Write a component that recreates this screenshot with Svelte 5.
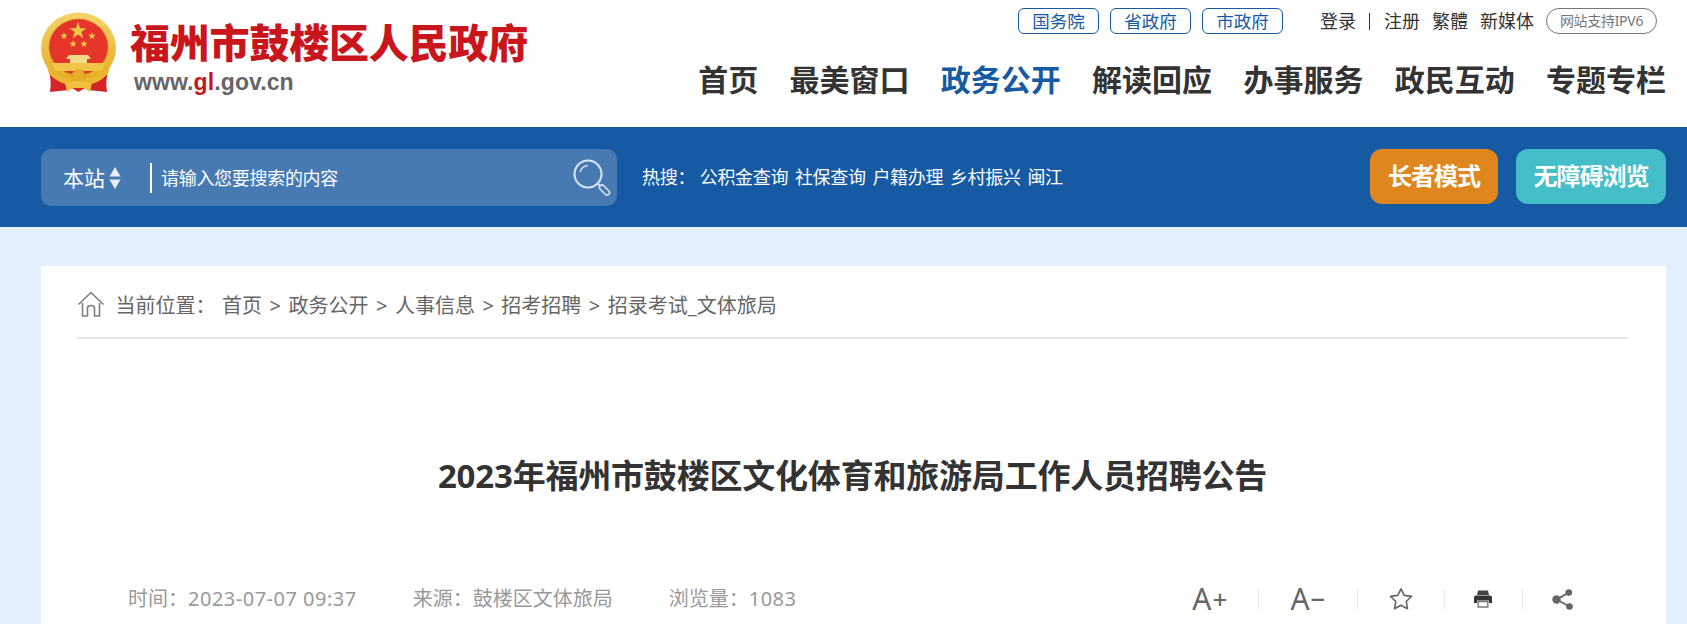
<script>
  const govLinks = ['国务院', '省政府', '市政府'];
  const navItems = ['首页', '最美窗口', '政务公开', '解读回应', '办事服务', '政民互动', '专题专栏'];
  const hotWords = ['公积金查询', '社保查询', '户籍办理', '乡村振兴', '闽江'];
  const crumbs = ['首页', '政务公开', '人事信息', '招考招聘', '招录考试_文体旅局'];

  function star(cx, cy, r, inner = 0.382) {
    const pts = [];
    for (let i = 0; i < 10; i++) {
      const rad = i % 2 ? r * inner : r;
      const a = ((-90 + i * 36) * Math.PI) / 180;
      pts.push(`${(cx + rad * Math.cos(a)).toFixed(2)},${(cy + rad * Math.sin(a)).toFixed(2)}`);
    }
    return pts.join(' ');
  }
</script>

<div class="page">
  <header class="top">
    <div class="logo">
      <svg class="emblem" width="80" height="84" viewBox="0 0 80 84">
        <defs>
          <linearGradient id="gold" x1="0" y1="0" x2="0" y2="1">
            <stop offset="0" stop-color="#f4d36a" />
            <stop offset="1" stop-color="#e6a91f" />
          </linearGradient>
        </defs>
        <!-- drapes -->
        <path d="M10 58 L30 70 L31 80 L12 82 Q14 70 10 58 Z" fill="#d3242a" />
        <path d="M71 58 L51 70 L50 80 L69 82 Q67 70 71 58 Z" fill="#d3242a" />
        <!-- ring and field -->
        <ellipse cx="40.5" cy="38" rx="37.5" ry="35.5" fill="url(#gold)" />
        <ellipse cx="40.5" cy="37" rx="29.5" ry="28" fill="#e5352b" stroke="#c98a1c" stroke-width="0.6" />
        <!-- stars -->
        <polygon points={star(40, 21, 9)} fill="#f2c94c" />
        <polygon points={star(26, 26, 4)} fill="#f2c94c" />
        <polygon points={star(54, 26, 4)} fill="#f2c94c" />
        <polygon points={star(35, 34, 4)} fill="#f2c94c" />
        <polygon points={star(46, 34, 4)} fill="#f2c94c" />
        <!-- gate -->
        <path d="M31 45 H50 L53 49 H49 V53 H32 V49 H28 Z" fill="#f6d98a" />
        <path d="M14 53 H67 L64 61 H17 Z" fill="#f2c447" />
        <!-- lower band -->
        <path d="M9 56 Q24 72 40.5 66 Q57 72 72 56 L70 64 Q56 78 40.5 74 Q25 78 11 64 Z" fill="#eeb52f" />
        <circle cx="40.5" cy="66" r="6.5" fill="#e9ae27" stroke="#d99a1c" stroke-width="0.8" />
        <path d="M27 73 L36 71 H45 L54 73 L52 82 L46 78 H35 L29 82 Z" fill="#f0bf3e" />
        <path d="M34 78 H47 L40.5 82 Z" fill="#d3242a" />
      </svg>
      <div class="logo-text">
        <div class="site-name">福州市鼓楼区人民政府</div>
        <div class="site-url">www.<span class="red">gl</span>.gov.cn</div>
      </div>
    </div>

    <div class="top-right">
      <div class="util">
        <div class="gov-links">
          {#each govLinks as link}
            <a class="gov" href="#top">{link}</a>
          {/each}
        </div>
        <a class="login" href="#top">登录</a>
        <span class="bar"></span>
        <a class="reg" href="#top">注册</a>
        <a class="trad" href="#top">繁體</a>
        <a class="media" href="#top">新媒体</a>
        <span class="ipv6">网站支持IPV6</span>
      </div>
      <nav class="nav">
        {#each navItems as item}
          <a class:active={item === '政务公开'} href="#top">{item}</a>
        {/each}
      </nav>
    </div>
  </header>

  <section class="band">
    <div class="search">
      <span class="scope">本站</span>
      <svg class="updown" width="12" height="24" viewBox="0 0 12 24">
        <path d="M6 1 L11.5 10.5 H0.5 Z M0.5 13.5 H11.5 L6 23 Z" fill="#e8eef6" />
      </svg>
      <span class="divider"></span>
      <span class="placeholder">请输入您要搜索的内容</span>
      <svg class="glass" width="38" height="38" viewBox="0 0 38 38" fill="none" stroke="#dbe6f2">
        <circle cx="15" cy="15" r="13.5" stroke-width="2" />
        <path d="M7 13 Q9 7 15 6.5" stroke-width="1.4" />
        <path d="M25 25 L27 27" stroke-width="2" />
        <rect x="25.5" y="28.5" width="12" height="5" rx="2.5" transform="rotate(45 31.5 31)" stroke-width="1.6" />
      </svg>
    </div>
    <div class="hot">
      <span class="hot-label">热搜&#xFF1A;</span>
      {#each hotWords as word}
        <a href="#top">{word}</a>
      {/each}
    </div>
    <div class="modes">
      <a class="mode orange" href="#top">长者模式</a>
      <a class="mode teal" href="#top">无障碍浏览</a>
    </div>
  </section>

  <main class="card">
    <div class="crumbs">
      <svg class="home" width="28" height="28" viewBox="0 0 28 28" fill="none" stroke="#7d7d7d" stroke-width="1.6">
        <path d="M1.5 14.5 L14 2.5 L26.5 14.5" />
        <path d="M5.5 13 V26 H10.5 V18 Q10.5 15.5 14 15.5 Q17.5 15.5 17.5 18 V26 H22.5 V13" />
      </svg>
      <span class="here">当前位置&#xFF1A;</span>
      {#each crumbs as crumb, i}
        {#if i > 0}<span class="sep">&gt;</span>{/if}
        <a href="#top">{crumb}</a>
      {/each}
    </div>

    <h1>2023年福州市鼓楼区文化体育和旅游局工作人员招聘公告</h1>

    <div class="meta">
      <span class="time">时间&#xFF1A;<span class="num">2023-07-07 09:37</span></span>
      <span class="source">来源&#xFF1A;鼓楼区文体旅局</span>
      <span class="views">浏览量&#xFF1A;<span class="num">1083</span></span>
      <div class="tools">
        <span class="tool font">A<i>+</i></span>
        <span class="tool font">A<i>−</i></span>
        <span class="tool">
          <svg width="24" height="24" viewBox="0 0 24 24">
            <polygon points={star(12, 12.8, 11, 0.5)} fill="none" stroke="#666" stroke-width="1.6" stroke-linejoin="round" />
          </svg>
        </span>
        <span class="tool print">
          <svg width="18" height="18" viewBox="0 0 18 18">
            <path d="M4 0.5 H14 L15 5 H3 Z" fill="#444" />
            <path d="M2 5.5 H16 Q18 5.5 18 7.5 V13 H15 V10.5 H3 V13 H0 V7.5 Q0 5.5 2 5.5 Z" fill="#333" />
            <path d="M4.2 11.5 H13.8 V17 H4.2 Z" fill="none" stroke="#777" stroke-width="1.4" />
          </svg>
        </span>
        <span class="tool last">
          <svg width="21" height="21" viewBox="0 0 21 21" fill="#666">
            <circle cx="4.5" cy="10.5" r="4.2" />
            <circle cx="16.8" cy="3.6" r="3.3" />
            <circle cx="17.5" cy="17.5" r="3.3" />
            <path d="M4.5 10.5 L16.8 3.6 M4.5 10.5 L17.5 17.5" stroke="#666" stroke-width="1.8" />
          </svg>
        </span>
      </div>
    </div>
  </main>
</div>

<style>
  :global(body) {
    margin: 0;
    background: #e3f1ff;
    font-family: "Noto Sans", "Noto Sans CJK SC", sans-serif;
  }
  a {
    color: inherit;
    text-decoration: none;
  }

  .page {
    height: 624px;
    overflow: hidden;
    background: #e3f1ff;
  }

  .top {
    height: 127px;
    box-sizing: border-box;
    background: #fff;
    padding: 0 21px 0 38px;
    display: flex;
    justify-content: space-between;
  }
  .logo {
    display: flex;
    align-items: flex-start;
  }
  .emblem {
    margin-top: 10px;
  }
  .logo-text {
    margin: 22px 0 0 12px;
  }
  .site-name {
    font-family: "Liberation Sans", "Noto Sans CJK SC", sans-serif;
    font-size: 40px;
    font-weight: 900;
    line-height: 44px;
    letter-spacing: -0.2px;
    color: #c9161d;
    white-space: nowrap;
  }
  .site-url {
    margin: 3px 0 0 4px;
    font-family: "Liberation Sans", sans-serif;
    font-size: 23px;
    font-weight: 700;
    line-height: 26px;
    letter-spacing: 0.1px;
    color: #666;
  }
  .red {
    color: #c9161d;
  }

  .top-right {
    display: flex;
    flex-direction: column;
    align-items: flex-end;
  }
  .util {
    display: flex;
    align-items: center;
    height: 26px;
    margin: 8px 9px 0 0;
    font-size: 18px;
    line-height: 26px;
    color: #333;
    white-space: nowrap;
  }
  .gov-links {
    display: flex;
    gap: 11px;
    margin-right: 37px;
  }
  .gov {
    box-sizing: border-box;
    width: 81px;
    height: 26px;
    border: 1px solid #155aa3;
    border-radius: 6px;
    text-align: center;
    font-size: 17.5px;
    line-height: 24px;
    color: #155aa3;
  }
  .bar {
    width: 1px;
    height: 17px;
    margin: 0 14px 0 13px;
    background: #333;
  }
  .reg {
    margin-right: 12px;
  }
  .trad {
    margin-right: 12px;
  }
  .media {
    margin-right: 12px;
  }
  .ipv6 {
    box-sizing: border-box;
    height: 26px;
    width: 111px;
    border: 1px solid #777;
    border-radius: 13px;
    text-align: center;
    font-size: 14px;
    letter-spacing: -0.3px;
    line-height: 24px;
    color: #777;
  }

  .nav {
    display: flex;
    gap: 31.3px;
    margin-top: 25px;
    font-family: "Noto Sans CJK SC", sans-serif;
    font-size: 30px;
    font-weight: 700;
    line-height: 38px;
    color: #333;
    white-space: nowrap;
  }
  .nav .active {
    color: #155aa3;
  }

  .band {
    height: 100px;
    box-sizing: border-box;
    background: #155aa3;
    padding: 0 21px 0 41px;
    display: flex;
    align-items: center;
    color: #fff;
  }
  .search {
    width: 576px;
    height: 57px;
    box-sizing: border-box;
    margin-top: 1px;
    padding: 0 6px 0 22px;
    border-radius: 10px;
    background: #4779b3;
    display: flex;
    align-items: center;
  }
  .scope {
    font-size: 21px;
    line-height: 28px;
  }
  .updown {
    margin-left: 4px;
  }
  .divider {
    width: 2px;
    height: 30px;
    margin: 0 9px 0 29px;
    background: #fff;
  }
  .placeholder {
    font-size: 18px;
    letter-spacing: -0.3px;
    line-height: 28px;
  }
  .glass {
    margin-left: auto;
  }
  .hot {
    display: flex;
    align-items: center;
    gap: 6.7px;
    margin-left: 25px;
    font-size: 18px;
    letter-spacing: -0.3px;
    line-height: 28px;
    white-space: nowrap;
  }
  .hot-label {
    margin-right: 1px;
    width: 50px;
  }
  .modes {
    display: flex;
    gap: 18px;
    margin-left: auto;
    margin-bottom: 2px;
  }
  .mode {
    height: 55px;
    border-radius: 12px;
    text-align: center;
    font-size: 24px;
    font-weight: 700;
    line-height: 53px;
    letter-spacing: -1px;
  }
  .orange {
    width: 128px;
    background: #e0861e;
  }
  .teal {
    width: 150px;
    background: #44bec8;
  }

  .card {
    margin: 39px 21px 0 41px;
    padding: 0 38px 0 36px;
    background: #fff;
    height: 400px;
  }
  .crumbs {
    height: 73px;
    box-sizing: border-box;
    padding: 26px 0 0 0;
    border-bottom: 2px solid #e2e6ee;
    display: flex;
    align-items: flex-start;
    gap: 7.5px;
    font-size: 20px;
    line-height: 28px;
    color: #666;
    white-space: nowrap;
  }
  .home {
    margin: -2px 3px 0 0;
  }
  .here {
    margin-right: -1px;
  }
  h1 {
    margin: 114px 0 0;
    text-align: center;
    font-family: "Noto Sans", "Noto Sans CJK SC", sans-serif;
    font-size: 33px;
    font-weight: 700;
    line-height: 46px;
    letter-spacing: -0.2px;
    color: #333;
  }
  .meta {
    display: flex;
    align-items: center;
    margin-top: 80px;
    padding-left: 51px;
    height: 40px;
    font-size: 20px;
    line-height: 28px;
    color: #999;
    white-space: nowrap;
  }
  .num {
    letter-spacing: 0.5px;
  }
  .source {
    margin-left: 56px;
  }
  .views {
    margin-left: 56px;
  }
  .tools {
    display: flex;
    align-items: center;
    margin-left: auto;
    margin-right: 24px;
    color: #666;
  }
  .tool {
    display: flex;
    align-items: center;
    justify-content: center;
    height: 20px;
    padding: 0 31px;
    border-right: 1px solid #e3e8f0;
  }
  .tool.print {
    padding: 0 29.5px;
  }
  .tool.last {
    padding-left: 29.5px;
    border-right: 0;
  }
  .font {
    font-size: 30px;
    line-height: 20px;
  }
  .font i {
    font-style: normal;
    font-size: 26px;
    font-weight: 500;
    margin-left: 1px;
  }
</style>
